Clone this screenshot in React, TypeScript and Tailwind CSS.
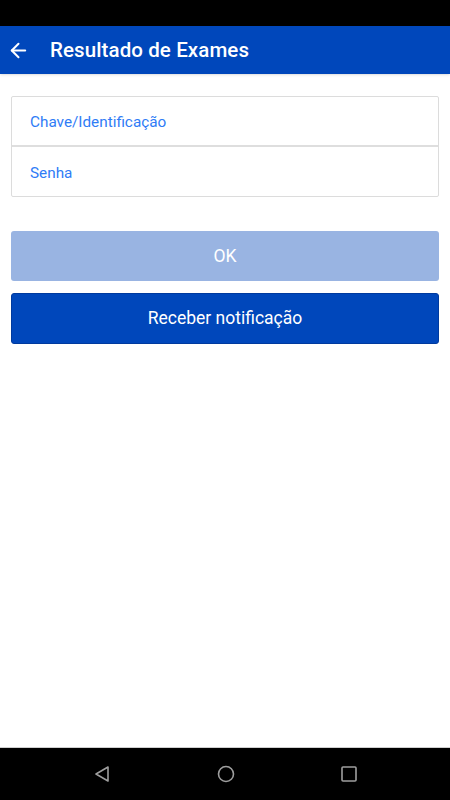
import { ArrowLeft } from "lucide-react";

function NavBar() {
    return (
        <div className="h-[53px] bg-black border-t border-[#cfcfcf] flex items-center justify-center">
            <div className="flex items-center justify-between w-[264px]">
                {/* back */}
                <svg width="18" height="18" viewBox="0 0 18 18">
                    <path d="M15 2 L3 9 L15 16 Z" fill="none" stroke="#9e9e9e" strokeWidth="1.6" strokeLinejoin="round" />
                </svg>
                {/* home */}
                <svg width="18" height="18" viewBox="0 0 18 18">
                    <circle cx="9" cy="9" r="7.5" fill="none" stroke="#9e9e9e" strokeWidth="1.6" />
                </svg>
                {/* recents */}
                <svg width="16" height="16" viewBox="0 0 16 16">
                    <rect x="1" y="1" width="14" height="14" rx="1" fill="none" stroke="#9e9e9e" strokeWidth="1.6" />
                </svg>
            </div>
        </div>
    );
}

export default function App() {
    return (
        <div className="w-[450px] h-[800px] flex flex-col bg-white font-['Roboto',sans-serif]">
            <div className="h-[26px] bg-black" />

            {/* Toolbar */}
            <div className="h-[48px] bg-[#0047bb] flex items-center shadow-sm">
                <div className="w-[50px] flex items-center pl-[7px]">
                    <ArrowLeft size={23} color="#ffffff" strokeWidth={2.1} />
                </div>
                <h1 className="text-white text-[20.5px] font-medium tracking-[0.1px]">Resultado de Exames</h1>
            </div>

            <div className="flex-1 px-[11px] pt-[22px]">
                {/* Fields */}
                <div className="border border-[#dcdcdc] rounded-[2px]">
                    <div className="h-[50px] flex items-center px-[18px] pt-[3px] border-b-2 border-[#dedede]">
                        <span className="text-[#2f7cf6] text-[15.3px]">Chave/Identificação</span>
                    </div>
                    <div className="h-[49px] flex items-center px-[18px] pt-[3px]">
                        <span className="text-[#2f7cf6] text-[15.3px]">Senha</span>
                    </div>
                </div>

                {/* Buttons */}
                <div className="mt-[34px] flex flex-col gap-[12px]">
                    <button className="h-[50px] rounded-[3px] bg-[#99b4e2] text-white text-[17.5px]">OK</button>
                    <button className="h-[51px] rounded-[3px] bg-[#0047bb] border border-[#003a9e] text-white text-[17.5px]">Receber notificação</button>
                </div>
            </div>

            <NavBar />
        </div>
    );
}
